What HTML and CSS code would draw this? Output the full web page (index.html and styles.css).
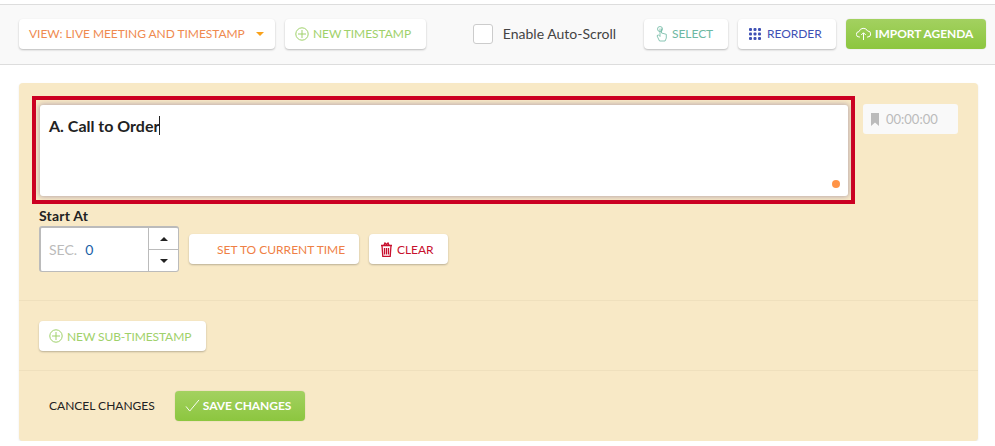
FILE: index.html
```html
<!DOCTYPE html>
<html lang="en">
<head>
    <meta charset="UTF-8">
    <link rel="stylesheet" href="styles.css">
    <title>Timestamps</title>
</head>
<body>
    <div class="toolbar">
        <button class="btn btn-view">
            <span>VIEW: LIVE MEETING AND TIMESTAMP</span>
            <span class="caret"></span>
        </button>
        <button class="btn btn-new">
            <svg class="icon" viewBox="0 0 14 14"><circle cx="7" cy="7" r="6.2"/><path d="M7 3v8M3 7h8"/></svg>
            NEW TIMESTAMP
        </button>
        <label class="auto-scroll">
            <span class="check"></span>
            Enable Auto-Scroll
        </label>
        <button class="btn btn-select">
            <svg class="icon" viewBox="0 0 11 16"><circle cx="4" cy="3" r="2.500"/><path d="M4 2.500v8L2.400 8.800 1 9.800 3.500 15h5.600l1.200-3V8.300L5.500 7V2.500"/></svg>
            SELECT
        </button>
        <button class="btn btn-reorder">
            <svg class="icon" viewBox="0 0 12 12"><g>
                <rect x="0" y="0" width="3" height="3" rx="1"/><rect x="4.500" y="0" width="3" height="3" rx="1"/><rect x="9" y="0" width="3" height="3" rx="1"/>
                <rect x="0" y="4.500" width="3" height="3" rx="1"/><rect x="4.500" y="4.500" width="3" height="3" rx="1"/><rect x="9" y="4.500" width="3" height="3" rx="1"/>
                <rect x="0" y="9" width="3" height="3" rx="1"/><rect x="4.500" y="9" width="3" height="3" rx="1"/><rect x="9" y="9" width="3" height="3" rx="1"/>
            </g></svg>
            REORDER
        </button>
        <button class="btn btn-import">
            <svg class="icon" viewBox="0 0 15 13"><path d="M4 10H3.200a2.700 2.700 0 0 1-.2-5.400A4.600 4.600 0 0 1 11.600 4a3 3 0 0 1 .2 6H11M7.500 13V6M5.200 8l2.300-2.300L9.800 8"/></svg>
            IMPORT AGENDA
        </button>
    </div>

    <div class="panel">
        <div class="section section-main">
            <div class="editor-row">
                <div class="editor-frame">
                    <div class="editor">
                        <span class="editor-text">A. Call to Order</span>
                        <span class="dot"></span>
                    </div>
                </div>
                <div class="timer">
                    <svg viewBox="0 0 8 13"><path d="M0 0h8v13L4 9.500 0 13z"/></svg>
                    00:00:00
                </div>
            </div>
            <div class="start-label">Start At</div>
            <div class="start-row">
                <div class="spinner">
                    <div class="spinner-input"><span class="sec">SEC.</span><span class="sec-value">0</span></div>
                    <div class="spinner-arrows">
                        <div class="arrow"><span class="arrow-up"></span></div>
                        <div class="arrow"><span class="arrow-down"></span></div>
                    </div>
                </div>
                <button class="btn btn-current">SET TO CURRENT TIME</button>
                <button class="btn btn-clear">
                    <svg class="icon" viewBox="0 0 13 15"><path d="M1 3.500h11M2 3.500l.8 11h7.400l.8-11M4.500 6v6.500M6.500 6v6.500M8.500 6v6.500M4 3l1-2 1.500 1.500L8 1l1 2"/></svg>
                    CLEAR
                </button>
            </div>
        </div>
        <div class="section section-sub">
            <button class="btn btn-sub">
                <svg class="icon" viewBox="0 0 14 14"><circle cx="7" cy="7" r="6.2"/><path d="M7 3v8M3 7h8"/></svg>
                NEW SUB-TIMESTAMP
            </button>
        </div>
        <div class="section section-actions">
            <span class="cancel">CANCEL CHANGES</span>
            <button class="btn btn-save">
                <svg class="icon" viewBox="0 0 16 14"><path d="M1 8l4 5L15 1"/></svg>
                SAVE CHANGES
            </button>
        </div>
    </div>
</body>
</html>
```

FILE: styles.css
```css
* {
    box-sizing: border-box;
}

body {
    margin: 0;
    font-family: Lato, "Open Sans", sans-serif;
    background-color: #fff;
    color: #222;
}

.toolbar {
    display: flex;
    align-items: center;
    height: 61px;
    margin-top: 4px;
    padding: 0 9px 2px 19px;
    background-color: #f9f9f9;
    border-top: 1px solid #ddd;
    border-bottom: 1px solid #ddd;
}

.btn {
    display: flex;
    align-items: center;
    height: 30px;
    padding: 0;
    border: none;
    border-radius: 4px;
    background-color: #fff;
    font-family: inherit;
    font-size: 12px;
    letter-spacing: -0.05px;
    white-space: nowrap;
    box-shadow: 0 1px 2px rgba(0, 0, 0, 0.25);
}

.icon {
    flex: none;
    fill: none;
    stroke: currentColor;
    stroke-width: 1;
}

.btn-view {
    width: 256px;
    padding: 0 10px;
    justify-content: space-between;
    color: #ef8a50;
}

.caret {
    width: 0;
    height: 0;
    margin-right: 1px;
    border-left: 4px solid transparent;
    border-right: 4px solid transparent;
    border-top: 4px solid #f9a11b;
}

.btn-new {
    width: 141px;
    margin-left: 10px;
    padding-left: 10px;
    color: #9fd16a;
    gap: 4px;
}

.btn-new .icon,
.btn-sub .icon {
    width: 14px;
    height: 14px;
}

.auto-scroll {
    display: flex;
    align-items: center;
    flex: none;
    gap: 10px;
    margin-left: 47px;
    font-size: 14px;
    white-space: nowrap;
    color: #444;
}

.check {
    width: 20px;
    height: 20px;
    border: 1px solid #ccc;
    border-radius: 3px;
    background-color: #fff;
}

.btn-select {
    flex: none;
    width: 84px;
    margin-left: 28px;
    padding-left: 12px;
    gap: 5px;
    color: #6db8a2;
}

.btn-select .icon {
    width: 11px;
    height: 16px;
    stroke-width: 0.8;
}

.btn-reorder {
    flex: none;
    width: 98px;
    margin-left: 10px;
    padding-left: 11px;
    gap: 6px;
    color: #3f51b5;
}

.btn-reorder .icon {
    width: 12px;
    height: 12px;
    fill: #3f51b5;
    stroke: none;
}

.btn-import {
    flex: none;
    width: 140px;
    margin-left: 10px;
    padding-left: 10px;
    gap: 4px;
    color: #fff;
    font-weight: 700;
    background: linear-gradient(#a3d160, #8cc63f);
    box-shadow: 0 0 1px rgba(0, 0, 0, 0.3);
}

.btn-import .icon {
    width: 15px;
    height: 13px;
}

.panel {
    width: 959px;
    height: 358px;
    margin: 18px 0 0 19px;
    border-radius: 4px;
    background-color: #f8e9c6;
    box-shadow: 0 1px 2px rgba(0, 0, 0, 0.1);
}

.section-main {
    height: 217px;
    padding: 13px 0 0 13px;
}

.editor-row {
    display: flex;
    align-items: flex-start;
    gap: 8px;
}

.editor-frame {
    width: 823px;
    height: 108px;
    padding: 5px 3px 4px 4px;
    border: 4px solid #cc0022;
}

.editor {
    position: relative;
    height: 91px;
    padding: 11px 9px;
    border-radius: 3px;
    background-color: #fff;
    box-shadow: 0 0 5px 1px rgba(130, 110, 150, 0.5);
}

.editor-text {
    border-right: 1px solid #222;
    font-size: 16px;
    font-weight: 700;
}

.dot {
    position: absolute;
    right: 8px;
    bottom: 8px;
    width: 8px;
    height: 8px;
    border-radius: 50%;
    background-color: #ff9447;
}

.timer {
    display: flex;
    align-items: center;
    gap: 7px;
    width: 95px;
    height: 30px;
    margin-top: 8px;
    padding-left: 8px;
    border-radius: 3px;
    background-color: #f9f9f9;
    font-size: 13px;
    color: #bbb;
}

.timer svg {
    width: 8px;
    height: 13px;
    fill: #bbb;
}

.start-label {
    margin: 3px 0 0 7px;
    height: 19px;
    font-size: 14px;
    line-height: 18px;
    font-weight: 700;
    letter-spacing: 0.2px;
}

.start-row {
    display: flex;
    align-items: center;
    margin-left: 7px;
}

.spinner {
    display: flex;
    width: 140px;
    height: 46px;
    border: 1px solid #bbb;
    border-top-width: 2px;
    border-left-width: 2px;
    border-radius: 3px;
    background-color: #fff;
}

.spinner-input {
    display: flex;
    align-items: center;
    gap: 8px;
    width: 107px;
    padding-left: 8px;
    font-size: 14px;
}

.sec {
    color: #bbb;
}

.sec-value {
    color: #1a5fa8;
}

.spinner-arrows {
    display: flex;
    flex-direction: column;
    flex: 1;
    border-left: 1px solid #bbb;
}

.arrow {
    display: flex;
    flex: 1;
    align-items: center;
    justify-content: center;
}

.arrow + .arrow {
    border-top: 1px solid #bbb;
}

.arrow-up,
.arrow-down {
    width: 0;
    height: 0;
    border-left: 4px solid transparent;
    border-right: 4px solid transparent;
}

.arrow-up {
    border-bottom: 4px solid #222;
}

.arrow-down {
    border-top: 4px solid #222;
}

.btn-current {
    width: 170px;
    margin-left: 10px;
    padding-left: 28px;
    letter-spacing: 0;
    color: #ef7f45;
}

.btn-clear {
    width: 79px;
    margin-left: 10px;
    padding-left: 11px;
    gap: 4px;
    color: #c8102e;
}

.btn-clear .icon {
    width: 13px;
    height: 15px;
    stroke-width: 1.3;
}

.section-sub {
    height: 70px;
    padding: 20px 0 0 20px;
    border-top: 1px solid #efe0bd;
}

.btn-sub {
    width: 167px;
    padding-left: 10px;
    gap: 4px;
    letter-spacing: -0.1px;
    color: #9fd16a;
}

.section-actions {
    display: flex;
    align-items: center;
    height: 71px;
    padding: 0 0 1px 30px;
    border-top: 1px solid #efe0bd;
}

.cancel {
    font-size: 12px;
    color: #222;
}

.btn-save {
    width: 130px;
    margin-left: 20px;
    padding-left: 10px;
    gap: 3px;
    color: #fff;
    font-weight: 700;
    background: linear-gradient(#a3d160, #8cc63f);
    box-shadow: 0 0 1px rgba(0, 0, 0, 0.3);
}

.btn-save .icon {
    width: 15px;
    height: 13px;
}
```
